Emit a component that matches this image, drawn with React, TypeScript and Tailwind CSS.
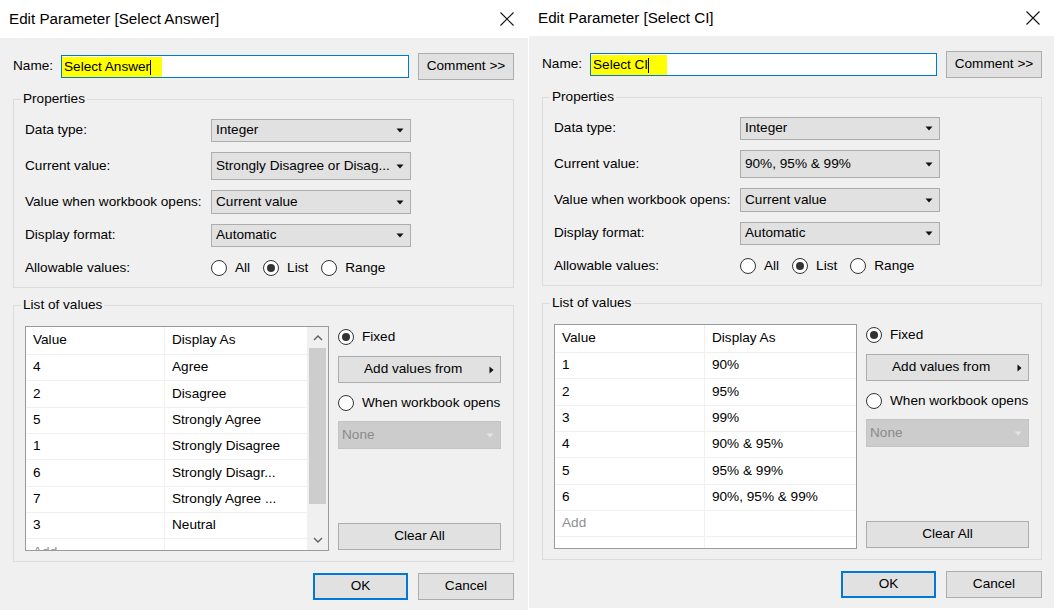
import React from "react";

type Row = { v: string; d: string; muted?: boolean };

function Tri({ light }: { light?: boolean }) {
  return (
    <svg width="8" height="5" viewBox="0 0 8 5" className="shrink-0">
      <path d="M0.5 0.5H7.5L4 4.5Z" fill={light ? "#e4e4e4" : "#111"} />
    </svg>
  );
}

function TriRight() {
  return (
    <svg width="5" height="8" viewBox="0 0 5 8" className="shrink-0">
      <path d="M0.5 0.5V7.5L4.5 4Z" fill="#111" />
    </svg>
  );
}

function Radio({ checked }: { checked?: boolean }) {
  return (
    <span className="w-[16px] h-[16px] rounded-full border border-[#333333] bg-white flex items-center justify-center shrink-0">
      {checked && <span className="w-[8px] h-[8px] rounded-full bg-[#333333]" />}
    </span>
  );
}

function Combo({ text, h }: { text: string; h: string }) {
  return (
    <div className={`w-[200px] ${h} flex items-center justify-between bg-[#e1e1e1] border border-[#adadad] pl-[4px] pr-[6px]`}>
      <span className="whitespace-nowrap">{text}</span>
      <Tri />
    </div>
  );
}

function PropRow({ label, children }: { label: string; children: React.ReactNode }) {
  return (
    <div className="flex items-center">
      <span className="w-[186px] whitespace-nowrap">{label}</span>
      {children}
    </div>
  );
}

function Chevron({ down }: { down?: boolean }) {
  return (
    <svg width="10" height="6" viewBox="0 0 10 6">
      <polyline
        points={down ? "1,1 5,5 9,1" : "1,5 5,1 9,5"}
        fill="none"
        stroke="#606060"
        strokeWidth="1.4"
      />
    </svg>
  );
}

function Scrollbar() {
  return (
    <div className="w-[21px] bg-[#f0f0f0] flex flex-col shrink-0">
      <div className="h-[21px] flex items-center justify-center">
        <Chevron />
      </div>
      <div className="h-[156px] mx-[2px] bg-[#cdcdcd]" />
      <div className="flex-1" />
      <div className="h-[21px] flex items-center justify-center">
        <Chevron down />
      </div>
    </div>
  );
}

type DialogProps = {
  title: string;
  name: string;
  hlW: string;
  size: string;
  titleH: string;
  titlePr: string;
  bodyPad: string;
  current: string;
  rows: Row[];
  colW: string;
  tableW: string;
  scroll: boolean;
};

function Dialog(p: DialogProps) {
  return (
    <div className={`${p.size} flex flex-col shrink-0`}>
      <div className={`${p.titleH} bg-white flex items-center justify-between pl-[9px] ${p.titlePr} shrink-0`}>
        <span className="text-[15.2px] text-black whitespace-nowrap">{p.title}</span>
        <svg width="14" height="14" viewBox="0 0 14 14">
          <path d="M0.5 0.5L13.5 13.5M13.5 0.5L0.5 13.5" stroke="#111" strokeWidth="1.1" />
        </svg>
      </div>
      <div className={`flex-1 bg-[#f0f0f0] flex flex-col ${p.bodyPad}`}>
        {/* Name row */}
        <div className="mt-[15px] h-[27px] flex items-center">
          <span className="w-[48px]">Name:</span>
          <div className="flex-1 h-[23px] border border-[#0078d7] bg-white flex items-stretch pt-[1px]">
            <div className={`${p.hlW} bg-[#ffff00] flex items-center pl-[2px]`}>
              <span className="whitespace-nowrap">{p.name}</span>
              <span className="w-[1px] h-[15px] bg-black" />
            </div>
          </div>
          <div className="ml-[9px] w-[96px] h-[27px] bg-[#e1e1e1] border border-[#adadad] flex items-center justify-center whitespace-nowrap">
            Comment &gt;&gt;
          </div>
        </div>

        {/* Properties */}
        <fieldset className="mt-[11px] border border-[#dcdcdc] pl-[11px] pr-[12px] pb-[11px]">
          <legend className="ml-[-4px] px-[2px] leading-[16px]">Properties</legend>
          <div className="mt-[12px] flex flex-col gap-[10px]">
            <PropRow label="Data type:">
              <Combo text="Integer" h="h-[23px]" />
            </PropRow>
            <PropRow label="Current value:">
              <Combo text={p.current} h="h-[28px]" />
            </PropRow>
            <PropRow label="Value when workbook opens:">
              <Combo text="Current value" h="h-[24px]" />
            </PropRow>
            <PropRow label="Display format:">
              <Combo text="Automatic" h="h-[23px]" />
            </PropRow>
            <div className="mt-[3px] h-[16px] flex items-center">
              <span className="w-[186px]">Allowable values:</span>
              <div className="flex items-center gap-[13px]">
                <div className="flex items-center gap-[8px]">
                  <Radio />
                  <span>All</span>
                </div>
                <div className="flex items-center gap-[8px]">
                  <Radio checked />
                  <span>List</span>
                </div>
                <div className="flex items-center gap-[8px]">
                  <Radio />
                  <span>Range</span>
                </div>
              </div>
            </div>
          </div>
        </fieldset>

        {/* List of values */}
        <fieldset className="mt-[9px] border border-[#dcdcdc] pl-[11px] pr-[12px] pb-[10px]">
          <legend className="ml-[-4px] px-[2px] leading-[16px]">List of values</legend>
          <div className="mt-[13px] flex gap-[9px]">
            <div className={`${p.tableW} h-[225px] border border-[#9a9a9a] bg-white flex overflow-hidden shrink-0`}>
              <div className="flex-1 flex flex-col">
                <div className="h-[28px] flex border-b border-[#f0f0f0] shrink-0">
                  <div className={`${p.colW} border-r border-[#f0f0f0] pl-[7px] flex items-center`}>Value</div>
                  <div className="flex-1 pl-[7px] flex items-center">Display As</div>
                </div>
                {p.rows.map((r, i) => (
                  <div key={i} className="h-[26.33px] flex border-b border-[#f0f0f0] shrink-0">
                    <div
                      className={`${p.colW} border-r border-[#f0f0f0] pl-[7px] flex items-center ${r.muted ? "text-[#8f8f8f]" : ""}`}
                    >
                      {r.v}
                    </div>
                    <div className="flex-1 pl-[7px] flex items-center whitespace-nowrap">{r.d}</div>
                  </div>
                ))}
              </div>
              {p.scroll && <Scrollbar />}
            </div>
            <div className="flex-1 h-[225px] flex flex-col">
              <div className="h-[22px] flex items-center gap-[8px]">
                <Radio checked />
                <span>Fixed</span>
              </div>
              <div className="mt-[8px] h-[27px] bg-[#e1e1e1] border border-[#adadad] flex items-center justify-between pl-[25px] pr-[6px]">
                <span>Add values from</span>
                <TriRight />
              </div>
              <div className="mt-[9px] h-[22px] flex items-center gap-[8px]">
                <Radio />
                <span className="whitespace-nowrap">When workbook opens</span>
              </div>
              <div className="mt-[7px] h-[28px] bg-[#cccccc] border border-[#c4c4c4] flex items-center justify-between pl-[3px] pr-[6px]">
                <span className="text-[#8a8a8a]">None</span>
                <Tri light />
              </div>
              <div className="mt-auto mb-[1px] h-[27px] bg-[#e1e1e1] border border-[#adadad] flex items-center justify-center">
                Clear All
              </div>
            </div>
          </div>
        </fieldset>

        <div className="mt-[11px] flex justify-end gap-[10px]">
          <div className="w-[95px] h-[27px] bg-[#e1e1e1] border-2 border-[#0078d7] flex items-center justify-center">OK</div>
          <div className="w-[96px] h-[27px] bg-[#e1e1e1] border border-[#adadad] flex items-center justify-center">Cancel</div>
        </div>
      </div>
    </div>
  );
}

const leftRows: Row[] = [
  { v: "4", d: "Agree" },
  { v: "2", d: "Disagree" },
  { v: "5", d: "Strongly Agree" },
  { v: "1", d: "Strongly Disagree" },
  { v: "6", d: "Strongly Disagr..." },
  { v: "7", d: "Strongly Agree ..." },
  { v: "3", d: "Neutral" },
  { v: "Add", d: "", muted: true },
];

const rightRows: Row[] = [
  { v: "1", d: "90%" },
  { v: "2", d: "95%" },
  { v: "3", d: "99%" },
  { v: "4", d: "90% & 95%" },
  { v: "5", d: "95% & 99%" },
  { v: "6", d: "90%, 95% & 99%" },
  { v: "Add", d: "", muted: true },
  { v: "", d: "" },
];

export default function App() {
  return (
    <div className="w-[1057px] h-[610px] bg-white flex items-start overflow-hidden text-[13.6px] text-black font-[family-name:Liberation_Sans,Arial,sans-serif]">
      <Dialog
        title="Edit Parameter [Select Answer]"
        name="Select Answer"
        hlW="w-[100px]"
        size="w-[528px] h-[610px]"
        titleH="h-[38px]"
        titlePr="pr-[14px]"
        bodyPad="pl-[13px] pr-[14px]"
        current="Strongly Disagree or Disag..."
        rows={leftRows}
        colW="w-[139px]"
        tableW="w-[304px]"
        scroll
      />
      <div className="w-[1px] shrink-0" />
      <Dialog
        title="Edit Parameter [Select CI]"
        name="Select CI"
        hlW="w-[76px]"
        size="w-[525px] h-[608px]"
        titleH="h-[36px]"
        titlePr="pr-[14px]"
        bodyPad="pl-[13px] pr-[12px]"
        current="90%, 95% & 99%"
        rows={rightRows}
        colW="w-[150px]"
        tableW="w-[303px]"
        scroll={false}
      />
    </div>
  );
}
